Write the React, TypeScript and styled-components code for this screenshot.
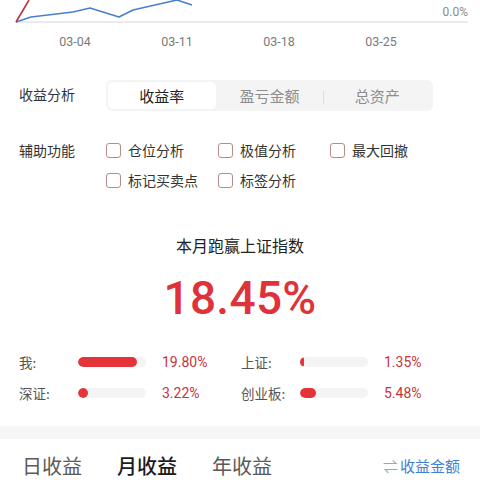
import React from "react";
import styled, { createGlobalStyle } from "styled-components";

const Global = createGlobalStyle`
  html, body { margin: 0; padding: 0; background: #fff; }
  body { font-family: "Noto Sans CJK SC", "Noto Sans", Roboto, sans-serif; color: #222; }
  * { box-sizing: border-box; }
`;

const Page = styled.div`
  width: 480px;
  height: 480px;
  overflow: hidden;
  display: flex;
  flex-direction: column;
  & > * {
    flex-shrink: 0;
  }
`;

const ChartBox = styled.div`
  position: relative;
  height: 30px;
`;

const ChartSvg = styled.svg`
  display: block;
  width: 480px;
  height: 30px;
`;

const AxisValue = styled.span`
  position: absolute;
  right: 12px;
  top: 5px;
  font-family: Roboto, sans-serif;
  font-size: 12px;
  color: #8a8a8a;
`;

const Axis = styled.div`
  display: flex;
  padding-left: 24px;
  padding-top: 1px;
  height: 22px;
  align-items: center;
`;

const AxisLabel = styled.span`
  width: 102px;
  text-align: center;
  font-family: Roboto, sans-serif;
  font-size: 12.5px;
  color: #7a7a7a;
`;

const Row = styled.div<{ $mt: number }>`
  display: grid;
  grid-template-columns: 87px 1fr;
  padding: 0 47px 0 19px;
  margin-top: ${(p) => p.$mt}px;
  align-items: start;
`;

const RowLabel = styled.div<{ $pt: number }>`
  font-size: 14px;
  color: #333;
  padding-top: ${(p) => p.$pt}px;
  line-height: 20px;
`;

const Segmented = styled.div`
  display: grid;
  grid-template-columns: repeat(3, 1fr);
  height: 31px;
  background: #f4f4f5;
  border-radius: 6px;
  padding: 2px;
`;

const SegTab = styled.div<{ $active?: boolean; $divider?: boolean }>`
  position: relative;
  display: flex;
  align-items: center;
  justify-content: center;
  font-size: 15px;
  border-radius: 5px;
  color: ${(p) => (p.$active ? "#222" : "#8c8c8c")};
  background: ${(p) => (p.$active ? "#fff" : "transparent")};
  &::before {
    content: "";
    display: ${(p) => (p.$divider ? "block" : "none")};
    position: absolute;
    left: 0;
    top: 9px;
    height: 13px;
    width: 1px;
    background: #dcdcdc;
  }
`;

const CheckGrid = styled.div`
  display: grid;
  grid-template-columns: repeat(3, 112px);
  grid-auto-rows: 30px;
`;

const CheckItem = styled.label`
  display: flex;
  align-items: center;
  gap: 7px;
  font-size: 14px;
  color: #333;
  height: 20px;
`;

const Box = styled.span`
  width: 15px;
  height: 15px;
  border: 1.3px solid #b98a8a;
  border-radius: 3px;
  background: #fff;
`;

const Title = styled.div`
  margin-top: 34px;
  text-align: center;
  font-size: 16px;
  color: #222;
  line-height: 22px;
`;

const BigNumber = styled.div`
  margin-top: 14px;
  text-align: center;
  font-family: Roboto, sans-serif;
  font-size: 46px;
  font-weight: 500;
  color: #e0323a;
  line-height: 56px;
  letter-spacing: 0.3px;
`;

const Stats = styled.div`
  margin-top: 20px;
  display: grid;
  grid-template-columns: 222px 1fr;
  grid-auto-rows: 31px;
  padding-left: 19px;
`;

const Stat = styled.div`
  display: grid;
  grid-template-columns: 59px 68px 1fr;
  align-items: center;
`;

const StatLabel = styled.span`
  font-size: 13.5px;
  color: #555;
`;

const Track = styled.div`
  height: 10px;
  background: #f4f4f4;
  border-radius: 5px;
  overflow: hidden;
`;

const Fill = styled.div`
  height: 100%;
  background: #e4343a;
  border-radius: 5px;
`;

const StatValue = styled.span`
  padding-left: 16px;
  font-family: Roboto, sans-serif;
  font-size: 14px;
  color: #c8333a;
`;

const Band = styled.div`
  margin-top: 18px;
  height: 13px;
  background: #f5f6f8;
`;

const BottomTabs = styled.div`
  display: flex;
  align-items: flex-end;
  padding: 0 20px 0 22px;
  height: 39px;
`;

const PeriodTab = styled.span<{ $active?: boolean }>`
  font-size: 20px;
  line-height: 24px;
  margin-right: 35px;
  color: ${(p) => (p.$active ? "#1c1c1c" : "#5a5a5a")};
  font-weight: ${(p) => (p.$active ? 500 : 400)};
`;

const Switch = styled.span`
  margin-left: auto;
  font-size: 15px;
  line-height: 24px;
  color: #3f7fd4;
  display: flex;
  align-items: center;
  gap: 2px;
`;

const SwitchIcon = styled.span`
  color: #8fa7c9;
`;

const bars = [
  { label: "我:", pct: 87, value: "19.80%" },
  { label: "上证:", pct: 6, value: "1.35%" },
  { label: "深证:", pct: 15, value: "3.22%" },
  { label: "创业板:", pct: 24, value: "5.48%" },
];

const checks = ["仓位分析", "极值分析", "最大回撤", "标记买卖点", "标签分析"];

export default function App() {
  return (
    <Page>
      <Global />
      <ChartBox>
        <ChartSvg viewBox="0 0 480 30">
          <line x1="16" y1="22" x2="468" y2="22" stroke="#d6d6dc" strokeWidth="1" />
          <polyline
            points="16,22 31,17 73,12 90,8 119,17 133,10 155,5 177,0 192,5"
            fill="none"
            stroke="#4a7fd0"
            strokeWidth="1.6"
            strokeLinejoin="round"
          />
          <polyline points="16,22 29,0" fill="none" stroke="#b8333a" strokeWidth="1.6" />
        </ChartSvg>
        <AxisValue>0.0%</AxisValue>
      </ChartBox>
      <Axis>
        {["03-04", "03-11", "03-18", "03-25"].map((d) => (
          <AxisLabel key={d}>{d}</AxisLabel>
        ))}
      </Axis>
      <Row $mt={28}>
        <RowLabel $pt={4}>收益分析</RowLabel>
        <Segmented>
          <SegTab $active>收益率</SegTab>
          <SegTab>盈亏金额</SegTab>
          <SegTab $divider>总资产</SegTab>
        </Segmented>
      </Row>
      <Row $mt={29}>
        <RowLabel $pt={0}>辅助功能</RowLabel>
        <CheckGrid>
          {checks.map((c) => (
            <CheckItem key={c}>
              <Box />
              {c}
            </CheckItem>
          ))}
        </CheckGrid>
      </Row>
      <Title>本月跑赢上证指数</Title>
      <BigNumber>18.45%</BigNumber>
      <Stats>
        {bars.map((b) => (
          <Stat key={b.label}>
            <StatLabel>{b.label}</StatLabel>
            <Track>
              <Fill style={{ width: `${b.pct}%` }} />
            </Track>
            <StatValue>{b.value}</StatValue>
          </Stat>
        ))}
      </Stats>
      <Band />
      <BottomTabs>
        <PeriodTab>日收益</PeriodTab>
        <PeriodTab $active>月收益</PeriodTab>
        <PeriodTab>年收益</PeriodTab>
        <Switch>
          <SwitchIcon>⇌</SwitchIcon>收益金额
        </Switch>
      </BottomTabs>
    </Page>
  );
}
